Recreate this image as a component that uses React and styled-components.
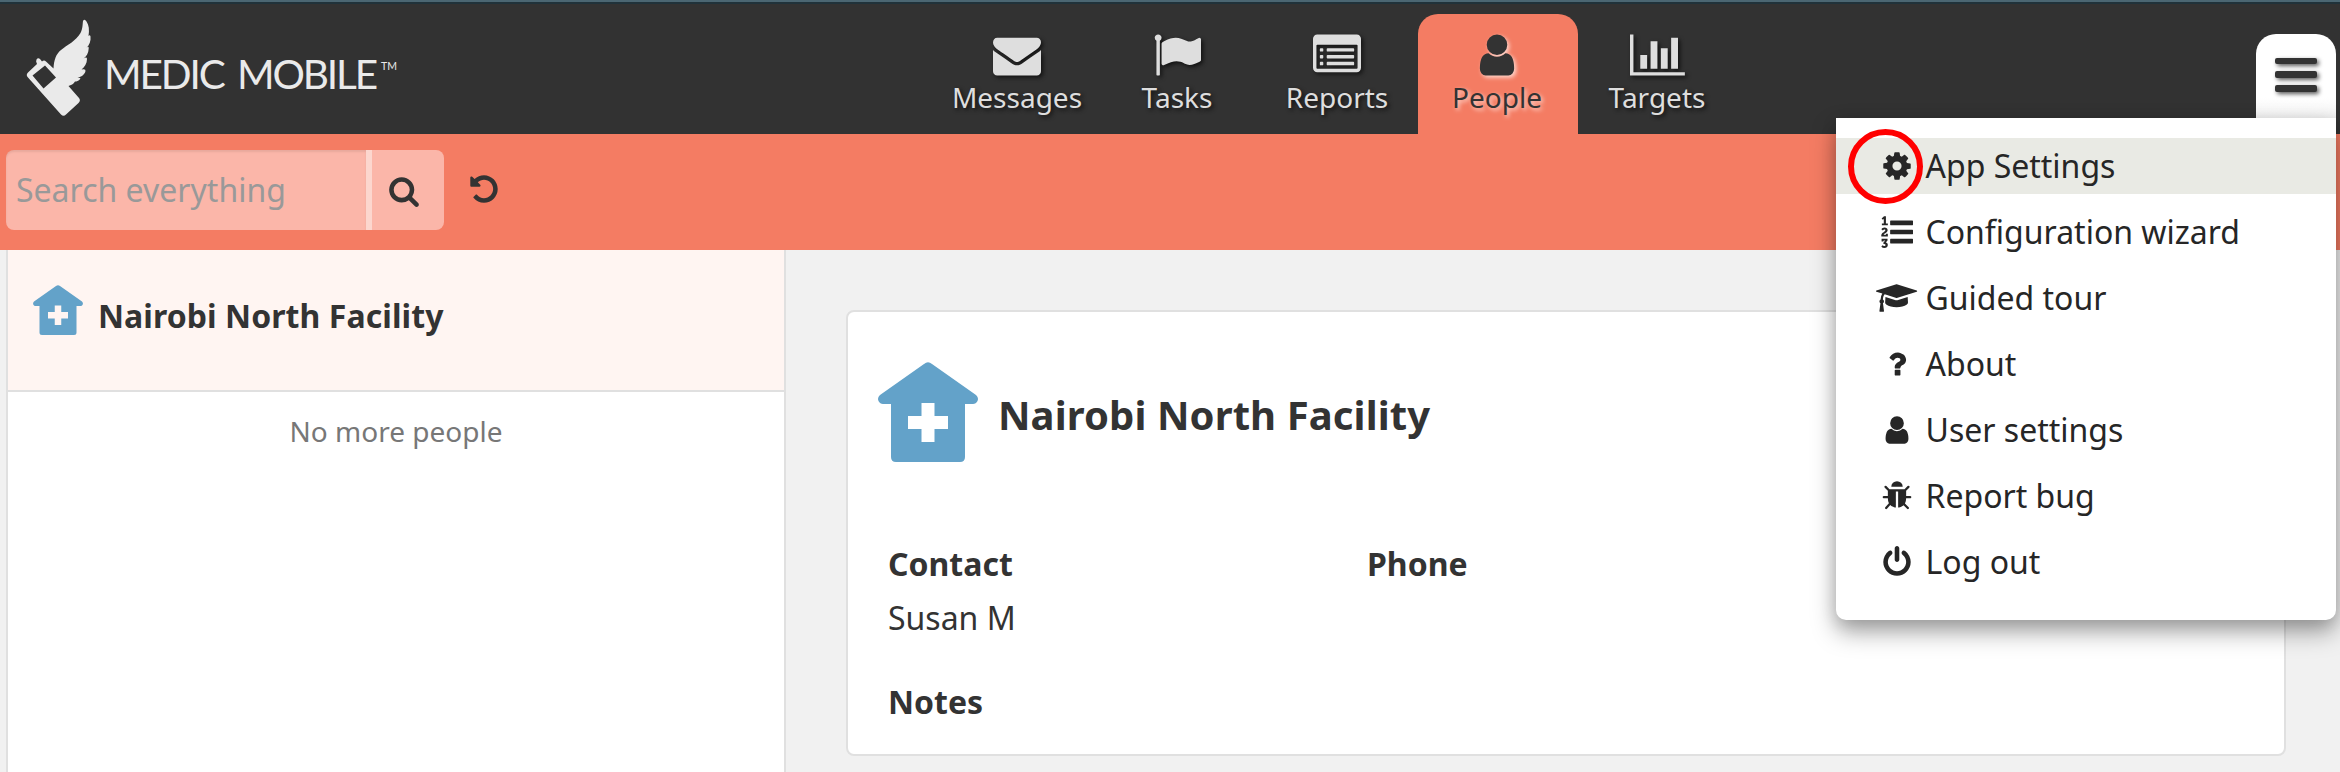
import React from "react";
import styled, { createGlobalStyle, css } from "styled-components";

const Global = createGlobalStyle`
  *, *::before, *::after { box-sizing: border-box; }
  html, body { margin: 0; padding: 0; }
  body { font-family: "Noto Sans", sans-serif; color: #333; background: #f1f1f1; overflow: hidden; }
`;

const coral = "#f47c63";

const Page = styled.div`
  height: 772px;
  display: flex;
  flex-direction: column;
  background: #f1f1f1;
  position: relative;
  overflow: hidden;
`;

const Header = styled.header`
  height: 134px;
  flex: none;
  display: flex;
  background: #323232;
  border-top: 2px solid #4b6672;
  box-shadow: inset 0 2px 0 #20323a;
`;

const Brand = styled.div`
  width: 938px;
  padding: 12px 0 0 26px;
  display: flex;
  align-items: flex-start;
`;

const BrandName = styled.div`
  margin: 34px 0 0 8px;
  display: flex;
  align-items: flex-start;
  font-family: Lato, sans-serif;
  font-size: 40.5px;
  line-height: 52px;
  letter-spacing: -2.1px;
  word-spacing: 5px;
  color: #eaeaea;
  white-space: nowrap;
`;

const Trademark = styled.span`
  font-size: 10.5px;
  line-height: 12px;
  letter-spacing: 0;
  margin: 12px 0 0 5px;
`;

const Nav = styled.nav`
  display: flex;
  padding-top: 12px;
`;

const NavTab = styled.a`
  width: 160px;
  height: 120px;
  padding: 17px 2px 0 0;
  display: flex;
  flex-direction: column;
  align-items: center;
  color: #dedede;
  font-size: 28px;
  line-height: 36px;
  text-shadow: 2px 2px 4px #111;
  svg { filter: drop-shadow(2px 2px 2px #111); }
  ${(p) =>
    p.$active &&
    css`
      background: ${coral};
      color: #333;
      border-radius: 20px 20px 0 0;
      text-shadow: 2px 2px 4px #ffd9d0;
      svg { filter: drop-shadow(2px 2px 2px #ffd9d0); }
    `}
`;

const MenuButton = styled.button`
  margin: 32px 4px 0 auto;
  width: 80px;
  height: 84px;
  border: 0;
  padding: 23.7px 19px;
  display: flex;
  flex-direction: column;
  gap: 7px;
  background: linear-gradient(#fff 75%, #f4f4f4);
  border-radius: 20px 20px 0 0;
`;

const MenuBar = styled.span`
  flex: none;
  width: 42px;
  height: 6.8px;
  border-radius: 2px;
  background: #333;
  box-shadow: 2px 2px 4px rgba(0, 0, 0, 0.65);
`;

const FilterBar = styled.div`
  height: 116px;
  flex: none;
  display: flex;
  align-items: flex-start;
  padding: 16px 0 0 6px;
  background: ${coral};
`;

const SearchField = styled.div`
  width: 360px;
  height: 80px;
  padding: 0 10px;
  font-size: 32px;
  line-height: 80px;
  color: #999;
  background: #fbb6a9;
  border-radius: 8px 0 0 8px;
  box-shadow: inset 0 2px 2px rgba(0, 0, 0, 0.08);
`;

const SearchButton = styled.button`
  width: 78px;
  height: 80px;
  border: 0;
  border-left: 6px solid #fcd6ce;
  padding: 1px 8px 0 0;
  display: flex;
  align-items: center;
  justify-content: center;
  color: #333;
  background: #fbb6a9;
  border-radius: 0 8px 8px 0;
`;

const ResetButton = styled.button`
  height: 80px;
  margin-left: 24px;
  border: 0;
  padding: 0 0 2px;
  display: flex;
  align-items: center;
  color: #333;
  background: none;
`;

const Content = styled.main`
  flex: 1;
  display: flex;
  padding-left: 6px;
`;

const ListPane = styled.section`
  width: 780px;
  flex: none;
  background: #fff;
  border: 2px solid #e0e0e0;
  border-width: 0 2px;
`;

const ListRow = styled.div`
  height: 142px;
  display: flex;
  align-items: flex-start;
  padding: 35px 0 0 25px;
  background: #fff5f2;
  border-bottom: 2px solid #e0e0e0;
`;

const RowTitle = styled.div`
  margin: 9px 0 0 15px;
  font-size: 32px;
  line-height: 44px;
  font-weight: 700;
  letter-spacing: 0.07px;
`;

const ListEnd = styled.div`
  padding-top: 19px;
  font-size: 28px;
  line-height: 40px;
  color: #777;
  text-align: center;
`;

const Card = styled.section`
  width: 1440px;
  height: 446px;
  margin: 60px 0 0 60px;
  padding: 50px 30px 0;
  background: #fff;
  border: 2px solid #e0e0e0;
  border-radius: 8px;
`;

const CardHead = styled.div`
  height: 100px;
  display: flex;
  align-items: center;
  gap: 20px;
`;

const CardTitle = styled.h2`
  margin: 0;
  padding-top: 5px;
  font-size: 40px;
  font-weight: 700;
  line-height: 56px;
  letter-spacing: 0.1px;
`;

const Fields = styled.dl`
  margin: 77px 0 0 10px;
  display: grid;
  grid-template-columns: 479px 479px;
  row-gap: 34px;
`;

const Field = styled.div`
  font-size: 32px;
  line-height: 50px;
`;
const Label = styled.dt`
  font-weight: 700;
  line-height: 50px;
`;
const Value = styled.dd`
  margin: 4px 0 0;
`;

const Menu = styled.ul`
  position: absolute;
  top: 118px;
  right: 4px;
  width: 500px;
  height: 502px;
  margin: 0;
  padding: 20px 0 0;
  list-style: none;
  background: #fff;
  border-radius: 0 0 10px 10px;
  box-shadow: 0 12px 24px rgba(0, 0, 0, 0.35), 0 4px 16px rgba(0, 0, 0, 0.12);
`;

const MenuItem = styled.li`
  height: 56px;
  margin-bottom: 10px;
  padding-left: 40.5px;
  display: flex;
  align-items: center;
  gap: 9px;
  font-size: 32px;
  line-height: 56px;
  color: #262626;
  background: ${(p) => (p.$hover ? "#e9eae4" : "transparent")};
`;

const IconSlot = styled.span`
  width: 40px;
  flex: none;
  display: flex;
  justify-content: center;
`;

const Ring = styled.div`
  position: absolute;
  left: 1848px;
  top: 129px;
  width: 75px;
  height: 75px;
  border: 6px solid #f00;
  border-radius: 50%;
`;

const Svg = styled.svg`
  display: block;
  flex: none;
  fill: currentColor;
  overflow: visible;
`;

function Icon({ d, size = 32, w = 1792, flip, children, y = 0 }) {
  return (
    <Svg width={(size * w) / 1792} height={size} viewBox={`0 ${y} ${w} 1792`}>
      {children || <path d={d} transform={flip ? "matrix(1 0 0 -1 0 1536)" : undefined} />}
    </Svg>
  );
}

const USER =
  "M1536 1399q0 109-62.5 187t-150.5 78h-854q-88 0-150.5-78t-62.5-187q0-85 8.5-160.5t31.5-152 58.5-131 94-89 134.5-34.5q131 128 313 128t313-128q76 0 134.5 34.5t94 89 58.5 131 31.5 152 8.5 160.5zm-256-887q0 159-112.5 271.5t-271.5 112.5-271.5-112.5-112.5-271.5 112.5-271.5 271.5-112.5 271.5 112.5 112.5 271.5z";
const COG =
  "M1152 896q0-106-75-181t-181-75-181 75-75 181 75 181 181 75 181-75 75-181zm512-109v222q0 12-8 23t-20 13l-185 28q-19 54-39 91 35 50 107 138 10 12 10 25t-9 23q-27 37-99 108t-94 71q-12 0-26-9l-138-108q-44 23-91 38-16 136-29 186-7 28-36 28h-222q-14 0-24.5-8.5t-11.5-21.5l-28-184q-49-16-90-37l-141 107q-10 9-25 9-14 0-25-11-126-114-165-168-7-10-7-23 0-12 8-23 15-21 51-66.5t54-70.5q-27-50-41-99l-183-27q-13-2-21-12.5t-8-23.5v-222q0-12 8-23t19-13l186-28q14-46 39-92-40-57-107-138-10-12-10-24 0-10 9-23 26-36 98.5-107.5t94.5-71.5q13 0 26 10l138 107q44-23 91-38 16-136 29-186 7-28 36-28h222q14 0 24.5 8.5t11.5 21.5l28 184q49 16 90 37l142-107q9-9 24-9 13 0 25 10 129 119 165 170 7 8 7 22 0 12-8 23-15 21-51 66.5t-54 70.5q26 50 41 98l183 28q13 2 21 12.5t8 23.5z";
const SEARCH =
  "M1216 832q0-185-131.5-316.5t-316.5-131.5-316.5 131.5-131.5 316.5 131.5 316.5 316.5 131.5 316.5-131.5 131.5-316.5zm512 832q0 52-38 90t-90 38q-54 0-90-38l-343-342q-179 124-399 124-143 0-273.5-55.5t-225-150-150-225-55.5-273.5 55.5-273.5 150-225 225-150 273.5-55.5 273.5 55.5 225 150 150 225 55.5 273.5q0 220-124 399l343 343q37 37 37 90z";
const UNDO =
  "M1664 896q0 156-61 298t-164 245-245 164-298 61q-172 0-327-72.5t-264-204.5q-7-10-6.5-22.5t8.5-20.5l137-138q10-9 25-9 16 2 23 12 73 95 179 147t225 52q104 0 198.5-40.5t163.5-109.5 109.5-163.5 40.5-198.5-40.5-198.5-109.5-163.5-163.5-109.5-198.5-40.5q-98 0-188 35.5t-160 101.5l137 138q31 30 14 69-17 40-59 40h-448q-26 0-45-19t-19-45v-448q0-42 40-59 39-17 69 14l130 129q107-101 244.5-156.5t284.5-55.5q156 0 298 61t245 164 164 245 61 298z";
const POWER =
  "M1664 896q0 156-61 298t-164 245-245 164-298 61-298-61-245-164-164-245-61-298q0-182 80.5-343t226.5-270q43-32 95.5-25t83.5 50q32 42 24.5 94.5t-49.5 84.5q-98 74-151.5 181t-53.5 228q0 104 40.5 198.5t109.5 163.5 163.5 109.5 198.5 40.5 198.5-40.5 163.5-109.5 109.5-163.5 40.5-198.5q0-121-53.5-228t-151.5-181q-42-32-49.5-84.5t24.5-94.5q31-43 84-50t95 25q146 109 226.5 270t80.5 343zm-640-768v640q0 52-38 90t-90 38-90-38-38-90v-640q0-52 38-90t90-38 90 38 38 90z";
const BUG =
  "M1696 960q0 26-19 45t-45 19h-224q0 171-67 290l208 209q19 19 19 45t-19 45q-18 19-45 19t-45-19l-198-197q-5 5-15 13t-42 28.5-65 36.5-82 29-97 13v-896h-128v896q-51 0-101.5-13.5t-87-33-66-39-43.5-32.5l-15-14-183 207q-20 21-48 21-24 0-43-16-19-18-20.5-44.5t15.5-46.5l202-227q-58-114-58-274h-224q-26 0-45-19t-19-45 19-45 45-19h224v-294l-173-173q-19-19-19-45t19-45 45-19 45 19l173 173h844l173-173q19-19 45-19t45 19 19 45-19 45l-173 173v294h224q26 0 45 19t19 45zm-480-576h-640q0-133 93.5-226.5t226.5-93.5 226.5 93.5 93.5 226.5z";
const QUESTION =
  "M1088 1256v240q0 16-12 28t-28 12h-240q-16 0-28-12t-12-28v-240q0-16 12-28t28-12h240q16 0 28 12t12 28zm316-600q0 54-15.5 101t-35 76.5-55 59.5-57.5 43.5-61 35.5q-41 23-68.5 65t-27.5 67q0 17-12 32.5t-28 15.5h-240q-15 0-25.5-18.5t-10.5-37.5v-45q0-83 65-156.5t143-108.5q59-27 84-56t25-76q0-42-46.5-74t-107.5-32q-65 0-108 29-35 25-107 115-13 16-31 16-12 0-25-8l-164-125q-13-10-15.5-25t5.5-28q160-266 464-266 80 0 161 31t146 83 106 127.5 41 158.5z";
const GRADUATION =
  "M1774 700l18 -316q4 -69 -82 -128t-235 -93.5t-323 -34.5t-323 34.5t-235 93.5t-82 128l18 316l574 -181q22 -7 48 -7t48 7zM2304 1024q0 -23 -22 -31l-1120 -352q-4 -1 -10 -1t-10 1l-652 206q-43 -34 -71 -111.5t-34 -178.5q63 -36 63 -109q0 -69 -58 -107l58 -433q2 -14 -8 -25q-9 -11 -24 -11h-192q-15 0 -24 11q-10 11 -8 25l58 433q-58 38 -58 107q0 73 65 111q11 207 98 330l-333 104q-22 8 -22 31t22 31l1120 352q4 1 10 1t10 -1l1120 -352q22 -8 22 -31z";
const LIST_OL =
  "M381 -84q0 -80 -54.5 -126t-135.5 -46q-106 0 -172 66l57 88q49 -45 106 -45q29 0 50.5 14.5t21.5 42.5q0 64 -105 56l-26 56q8 10 32.5 43.5t42.5 54t37 38.5v1q-16 0 -48.5 -1t-48.5 -1v-53h-106v152h333v-88l-95 -115q51 -12 81 -49t30 -88zM383 543v-159h-362q-6 36 -6 54q0 51 23.5 93t56.5 68t66 47.5t56.5 43.5t23.5 45q0 25 -14.5 38.5t-39.5 13.5q-46 0 -81 -58l-85 59q24 51 71.5 79.5t105.5 28.5q73 0 123 -41.5t50 -112.5q0 -50 -34 -91.5t-75 -64.5t-75.5 -50.5t-35.5 -52.5h127v60h105zM1792 224v-192q0 -13 -9.5 -22.5t-22.5 -9.5h-1216q-13 0 -22.5 9.5t-9.5 22.5v192q0 14 9 23t23 9h1216q13 0 22.5 -9.5t9.5 -22.5zM384 1123v-99h-335v99h107q0 41 .5 122t.5 121v12h-2q-8 -17 -50 -54l-71 76l136 127h106v-404h108zM1792 736v-192q0 -13 -9.5 -22.5t-22.5 -9.5h-1216q-13 0 -22.5 9.5t-9.5 22.5v192q0 14 9 23t23 9h1216q13 0 22.5 -9.5t9.5 -22.5zM1792 1248v-192q0 -13 -9.5 -22.5t-22.5 -9.5h-1216q-13 0 -22.5 9.5t-9.5 22.5v192q0 13 9.5 22.5t22.5 9.5h1216q13 0 22.5 -9.5t9.5 -22.5z";
const FLAG =
  "M320 256q0 72-64 110v1266q0 13-9.5 22.5t-22.5 9.5h-64q-13 0-22.5-9.5t-9.5-22.5v-1266q-64-38-64-110 0-53 37.5-90.5t90.5-37.5 90.5 37.5 37.5 90.5zm1472 64v763q0 25-12.5 38.5t-39.5 27.5q-215 116-369 116-61 0-123.5-22t-108.5-48-115.5-48-142.5-22q-192 0-464 146-17 9-33 9-26 0-45-19t-19-45v-742q0-32 31-55 21-14 79-43 236-120 421-120 107 0 200 29t219 88q38 19 88 19 54 0 117.5-21t110-47 88-47 54.5-21q26 0 45 19t19 45z";
const ENVELOPE =
  "M1792 710v794q0 66-47 113t-113 47h-1472q-66 0-113-47t-47-113v-794q44 49 101 87 362 246 497 345 57 42 92.5 65.5t94.5 48 110 24.5h2q51 0 110-24.5t94.5-48 92.5-65.5q170-123 498-345 57-39 100-87zm0-294q0 79-49 151t-122 123q-376 261-468 325-10 7-42.5 31t-54 38.5-52 32.5-57.5 27-50 9h-2q-23 0-50-9t-57.5-27-52-32.5-54-38.5-42.5-31q-91-64-262-182.5t-205-142.5q-62-42-117-115.5t-55-136.5q0-78 41.5-130t118.5-52h1472q65 0 112.5 47t47.5 113z";
const BARS =
  "M640 768v512h-256v-512h256zm384-512v1024h-256v-1024h256zm1024 1152v128h-2048v-1536h128v1408h1920zm-640-896v768h-256v-768h256zm384-384v1152h-256v-1152h256z";
const LIST_ALT =
  "M160 128H1632A160 160 0 0 1 1792 288V1376A160 160 0 0 1 1632 1536H160A160 160 0 0 1 0 1376V288A160 160 0 0 1 160 128ZM160 512Q128 512 128 544V1376Q128 1408 160 1408H1632Q1664 1408 1664 1376V544Q1664 512 1632 512ZM288 640h64q32 0 32 32v64q0 32-32 32h-64q-32 0-32-32v-64q0-32 32-32ZM288 896h64q32 0 32 32v64q0 32-32 32h-64q-32 0-32-32v-64q0-32 32-32ZM288 1152h64q32 0 32 32v64q0 32-32 32h-64q-32 0-32-32v-64q0-32 32-32ZM544 640h960q32 0 32 32v64q0 32-32 32h-960q-32 0-32-32v-64q0-32 32-32ZM544 896h960q32 0 32 32v64q0 32-32 32h-960q-32 0-32-32v-64q0-32 32-32ZM544 1152h960q32 0 32 32v64q0 32-32 32h-960q-32 0-32-32v-64q0-32 32-32Z";

function House({ size }) {
  return (
    <Svg width={size} height={size} viewBox="0 0 100 100" color="#63a2c9">
      <path
        fillRule="evenodd"
        d="M46 2Q50-1.500 54 2L98 33Q101 36 99.500 39Q98 42 95 42H87V95Q87 100 82 100H18Q13 100 13 95V42H5Q2 42 .5 39Q-1 36 2 33ZM43.500 41V54H30V67H43.500V80H56.500V67H70V54H56.500V41Z"
      />
    </Svg>
  );
}

function Logo() {
  return (
    <Svg width="70" height="104" viewBox="26 14 70 104" color="#eaeaea">
      <path
        fillRule="evenodd"
        d="M28 72.500L37 64Q35.500 61 36.500 59.500Q38 57.500 40 59L42 61.500Q44 59.500 46 61.500L53.500 68.500C54 60 56 54 61 50C67 45 76 41 80.500 33C83 28 82.500 24 83 21Q84.500 18.500 86.500 21.500C89 25 89.500 30 88.500 36Q90 34.500 90.500 36.500C91 41 89.500 45 86.500 48Q89 45.500 88.700 48.500C88.500 53 86.500 56.500 83.500 58.500Q87 56.500 87 59C87 63.500 84.500 67 81.500 69.500Q86 68.500 85.500 71C84.500 75 81.500 76.500 77.500 78H80.500C79.500 81 76 82 72.500 81.500H75C73.500 84.500 71 85 68.500 86L79 98Q81 100.500 78.500 103L66 114.500Q63.500 117 61 114.500L28 77.500Q25.500 75 28 72.500ZM32.500 75.500L43.500 88.500L56 77.500L45 65.500Z"
      />
    </Svg>
  );
}

const tabs = [
  { label: "Messages", icon: <Icon size={48} d={ENVELOPE} /> },
  { label: "Tasks", icon: <Icon size={48} d={FLAG} /> },
  {
    label: "Reports",
    icon: (
      <Icon size={48}>
        <path fillRule="evenodd" d={LIST_ALT} />
      </Icon>
    ),
  },
  { label: "People", icon: <Icon size={48} d={USER} />, active: true },
  { label: "Targets", icon: <Icon size={48} w={2048} y={-128} d={BARS} /> },
];

const items = [
  { label: "App Settings", icon: <Icon d={COG} />, hover: true },
  { label: "Configuration wizard", icon: <Icon d={LIST_OL} flip /> },
  { label: "Guided tour", icon: <Icon w={2304} d={GRADUATION} flip /> },
  { label: "About", icon: <Icon d={QUESTION} /> },
  { label: "User settings", icon: <Icon d={USER} /> },
  { label: "Report bug", icon: <Icon d={BUG} /> },
  { label: "Log out", icon: <Icon d={POWER} /> },
];

export default function App() {
  return (
    <Page>
      <Global />
      <Header>
        <Brand>
          <Logo />
          <BrandName>
            <span>MEDIC MOBILE</span>
            <Trademark>TM</Trademark>
          </BrandName>
        </Brand>
        <Nav>
          {tabs.map((t) => (
            <NavTab key={t.label} $active={t.active}>
              {t.icon}
              {t.label}
            </NavTab>
          ))}
        </Nav>
        <MenuButton aria-label="Menu">
          <MenuBar />
          <MenuBar />
          <MenuBar />
        </MenuButton>
      </Header>
      <FilterBar>
        <SearchField>Search everything</SearchField>
        <SearchButton aria-label="Search">
          <Icon d={SEARCH} />
        </SearchButton>
        <ResetButton aria-label="Reset">
          <Icon d={UNDO} />
        </ResetButton>
      </FilterBar>
      <Content>
        <ListPane>
          <ListRow>
            <House size={50} />
            <RowTitle>Nairobi North Facility</RowTitle>
          </ListRow>
          <ListEnd>No more people</ListEnd>
        </ListPane>
        <Card>
          <CardHead>
            <House size={100} />
            <CardTitle>Nairobi North Facility</CardTitle>
          </CardHead>
          <Fields>
            <Field>
              <Label>Contact</Label>
              <Value>Susan M</Value>
            </Field>
            <Field>
              <Label>Phone</Label>
            </Field>
            <Field>
              <Label>Notes</Label>
            </Field>
          </Fields>
        </Card>
      </Content>
      <Menu>
        {items.map((m) => (
          <MenuItem key={m.label} $hover={m.hover}>
            <IconSlot>{m.icon}</IconSlot>
            {m.label}
          </MenuItem>
        ))}
      </Menu>
      <Ring />
    </Page>
  );
}
